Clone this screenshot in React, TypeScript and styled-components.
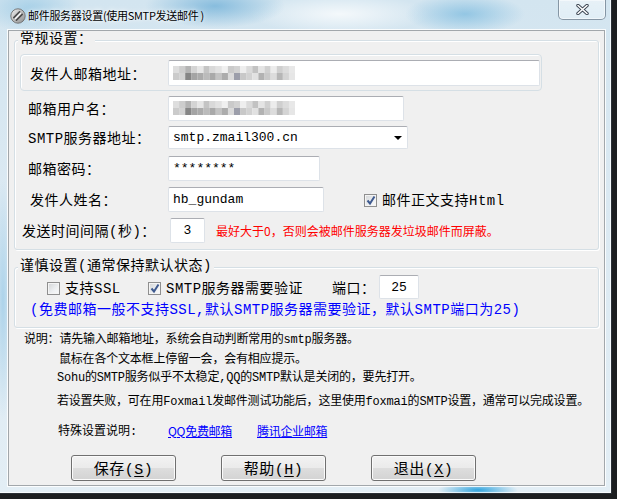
import React from 'react';
import styled, { createGlobalStyle } from 'styled-components';

const MIXED = `"Liberation Mono", "Noto Sans CJK SC", monospace`;
const SANS = `"Noto Sans CJK SC", "Noto Sans", sans-serif`;

const GlobalStyle = createGlobalStyle`
  html, body { margin: 0; padding: 0; }
  body {
    width: 617px;
    height: 499px;
    overflow: hidden;
    background: #1c1e20;
    font-family: ${MIXED};
  }
`;

// aero glass frame
const Window = styled.div`
  width: 612px;
  height: 494px;
  box-sizing: border-box;
  display: flex;
  flex-direction: column;
  border-right: 1px solid #2a3036;
  border-bottom: 1px solid #2a3036;
  background:
    radial-gradient(ellipse 40px 8px at 478px 490px, rgba(40, 160, 220, 0.95), rgba(40, 160, 220, 0) 100%),
    radial-gradient(ellipse 70px 22px at 215px 6px, rgba(110, 175, 215, 0.75), rgba(110, 175, 215, 0) 100%),
    radial-gradient(ellipse 60px 20px at 465px 14px, rgba(120, 185, 222, 0.7), rgba(120, 185, 222, 0) 100%),
    radial-gradient(ellipse 50px 24px at 30px 8px, rgba(150, 200, 228, 0.7), rgba(150, 200, 228, 0) 100%),
    radial-gradient(ellipse 90px 20px at 340px 14px, rgba(255, 255, 255, 0.75), rgba(255, 255, 255, 0) 100%),
    radial-gradient(ellipse 10px 120px at 3px 300px, rgba(160, 205, 232, 0.8), rgba(160, 205, 232, 0) 100%),
    linear-gradient(180deg, #d3e5f0 0%, #dbe9f2 40%, #e3eef5 100%);
  box-shadow: inset -1px -1px 0 rgba(255, 255, 255, 0.7);
`;

const TitleBar = styled.div`
  height: 30px;
  flex: 0 0 30px;
  display: flex;
  align-items: center;
  padding-left: 10px;
`;

const AppIcon = styled.svg`
  width: 16px;
  height: 16px;
  flex: 0 0 16px;
  margin-top: 1px;
`;

const TitleText = styled.div`
  margin-left: 2px;
  font-family: ${SANS};
  font-size: 11px;
  letter-spacing: -0.3px;
  color: #000;
  text-shadow: 0 0 6px #fff, 0 0 3px rgba(255, 255, 255, 0.9);
`;

const CloseButton = styled.div`
  align-self: flex-start;
  margin-left: auto;
  margin-right: 5px;
  width: 48px;
  height: 20px;
  box-sizing: border-box;
  border: 1px solid rgba(70, 90, 110, 0.6);
  border-top: none;
  border-radius: 0 0 5px 5px;
  background: linear-gradient(180deg, rgba(255, 255, 255, 0.45), rgba(230, 242, 248, 0.7));
  box-shadow: inset 0 0 0 1px rgba(255, 255, 255, 0.5);
  display: flex;
  align-items: center;
  justify-content: center;
`;

const Client = styled.div`
  margin-left: 8px;
  width: 597px;
  height: 456px;
  box-sizing: border-box;
  border: 1px solid #a2a7ab;
  box-shadow: 0 0 0 1px rgba(255, 255, 255, 0.85);
  background: #f0f0f0;
  padding: 0 5px;
  display: flex;
  flex-direction: column;
`;

const GroupBox = styled.div<{ $top: number; $height: number }>`
  position: relative;
  margin-top: ${(p) => p.$top}px;
  width: 585px;
  height: ${(p) => p.$height}px;
  flex: 0 0 auto;
  box-sizing: border-box;
  border: 1px solid #d5dfe5;
  border-radius: 3px;
  box-shadow: inset 1px 1px 0 #fff, 1px 1px 0 #fff;
  display: flex;
  flex-direction: column;
`;

const Legend = styled.span`
  position: absolute;
  left: 3px;
  top: -9px;
  padding: 0 2px;
  background: #f0f0f0;
  font-size: 14px;
  letter-spacing: 0.5px;
  line-height: 14px;
  color: #000;
`;

const Panel = styled.div`
  margin: 13px 0 0 5px;
  width: 522px;
  height: 37px;
  box-sizing: border-box;
  border: 1px solid #d5dfe5;
  border-radius: 4px;
  box-shadow: inset 1px 1px 0 #fff;
  display: flex;
  align-items: center;
`;

const Row = styled.div<{ $top: number; $height?: number }>`
  display: flex;
  align-items: center;
  height: ${(p) => p.$height ?? 26}px;
  margin-top: ${(p) => p.$top}px;
`;

const Label = styled.div<{ $indent: number; $width: number }>`
  box-sizing: border-box;
  flex: 0 0 ${(p) => p.$width}px;
  padding-left: ${(p) => p.$indent}px;
  font-size: 14px;
  letter-spacing: 0.5px;
  color: #000;
  white-space: nowrap;
`;

const TextBox = styled.div<{ $width: number; $height?: number; $center?: boolean }>`
  position: relative;
  box-sizing: border-box;
  flex: 0 0 ${(p) => p.$width}px;
  height: ${(p) => p.$height ?? 25}px;
  background: #fff;
  border: 1px solid #dde2e8;
  border-top-color: #abadb3;
  border-radius: 2px;
  display: flex;
  align-items: center;
  justify-content: ${(p) => (p.$center ? 'center' : 'flex-start')};
  padding-left: ${(p) => (p.$center ? 0 : 4)}px;
  font-family: "Liberation Mono", monospace;
  font-size: 13px;
  color: #000;
`;

const DropArrow = styled.span`
  position: absolute;
  right: 5px;
  top: 9px;
  width: 0;
  height: 0;
  border-left: 4px solid transparent;
  border-right: 4px solid transparent;
  border-top: 4px solid #000;
`;

const Hint = styled.span<{ $gap: number }>`
  margin-left: ${(p) => p.$gap}px;
  font-family: ${SANS};
  font-size: 12px;
  color: #ff0000;
  white-space: nowrap;
`;

const CheckItem = styled.div<{ $width: number; $gap?: number }>`
  display: flex;
  align-items: center;
  flex: 0 0 ${(p) => p.$width}px;
  margin-left: ${(p) => p.$gap ?? 0}px;
  font-size: 14px;
  letter-spacing: 0.5px;
  color: #000;
  white-space: nowrap;
`;

const Box = styled.span`
  position: relative;
  flex: 0 0 13px;
  width: 13px;
  height: 13px;
  box-sizing: border-box;
  border: 1px solid #8f8f8f;
  background: linear-gradient(135deg, #d2d4d6 0%, #eef0f2 60%, #fafafa 100%);
  box-shadow: inset 0 0 0 1px #f4f4f4;
  margin-right: 5px;
  margin-top: 2px;
`;

const Tick = styled.svg`
  position: absolute;
  left: 1px;
  top: 0px;
`;

const InfoLine = styled.div<{ $indent: number; $top: number; $color?: string; $size?: number }>`
  margin-top: ${(p) => p.$top}px;
  padding-left: ${(p) => p.$indent}px;
  height: 18px;
  line-height: 18px;
  font-size: ${(p) => p.$size ?? 12}px;
  letter-spacing: ${(p) => ((p.$size ?? 12) > 12 ? 0.5 : -0.2)}px;
  color: ${(p) => p.$color ?? '#000'};
  white-space: nowrap;
`;

const LinkRow = styled.div`
  display: flex;
  align-items: center;
  margin-top: 10px;
  padding-left: 44px;
  height: 18px;
  font-size: 12px;
  white-space: nowrap;
`;

const LinkCaption = styled.span`
  flex: 0 0 110px;
  color: #000;
`;

const Link = styled.a<{ $width: number }>`
  flex: 0 0 ${(p) => p.$width}px;
  font-family: ${SANS};
  color: #0000ff;
  text-decoration: underline;
  letter-spacing: -0.3px;
`;

const ButtonRow = styled.div`
  display: flex;
  gap: 45px;
  margin-top: 16px;
  padding-left: 57px;
`;

const Button = styled.button`
  width: 105px;
  height: 26px;
  box-sizing: border-box;
  border: 1px solid #707070;
  border-radius: 3px;
  background: linear-gradient(180deg, #f2f2f2 0%, #ebebeb 48%, #dddddd 52%, #d3d3d3 100%);
  box-shadow: inset 0 0 0 1px #fbfbfb;
  font-family: ${MIXED};
  font-size: 15px;
  letter-spacing: 0.5px;
  color: #000;
  padding: 0;

  u {
    text-underline-offset: 2px;
  }
`;

// pixelated address text
const mosaicTop = ['#dedede', '#cdcdcd', '#b4b4b4', '#d4d4d4', '#e6e6e6', '#c4c4c4', '#d9d9d9', '#e2e2e2', '#f0f0f0', '#cacaca', '#d2d2d2', '#eeeeee', '#dadada', '#c2c2c2', '#e4e4e4', '#d0d0d0', '#ececec', '#cfcfcf', '#dcdcdc', '#e8e8e8'];
const mosaicBottom = ['#cbcbcb', '#d3d3d3', '#868686', '#a4a4a4', '#ababab', '#bbbbbb', '#a9a9a9', '#c3c3c3', '#acacac', '#dadada', '#9c9eaa', '#c8c8c8', '#d2d2d2', '#e1e1e1', '#b2b2b2', '#c9c9c9', '#dcdcdc', '#b6b6b6', '#d4d4d4', '#e6e6e6'];

const Mosaic: React.FC = () => (
  <svg width="122" height="14" viewBox="0 0 122 14">
    {mosaicTop.map((c, i) => (
      <rect key={`t${i}`} x={i * 6.1} y={0} width={6.2} height={7} fill={c} />
    ))}
    {mosaicBottom.map((c, i) => (
      <rect key={`b${i}`} x={i * 6.1} y={7} width={6.2} height={7} fill={c} />
    ))}
  </svg>
);

const CheckBox: React.FC<{ checked?: boolean }> = ({ checked }) => (
  <Box>
    {checked && (
      <Tick width="10" height="11" viewBox="0 0 10 11">
        <path d="M1.5 5.5 L4 8.5 L8.5 1.5" fill="none" stroke="#3f5a8f" strokeWidth="2" />
      </Tick>
    )}
  </Box>
);

export default function App() {
  return (
    <>
      <GlobalStyle />
      <Window>
        <TitleBar>
          <AppIcon viewBox="0 0 16 16">
            <defs>
              <linearGradient id="disc" x1="0" y1="0" x2="1" y2="1">
                <stop offset="0" stopColor="#f0f0f0" />
                <stop offset="1" stopColor="#8c8c8c" />
              </linearGradient>
            </defs>
            <circle cx="8" cy="8" r="7.2" fill="url(#disc)" stroke="#6c6c6c" strokeWidth="0.9" />
            <path d="M3.8 9.6 L9.6 3.8 M6.4 12.2 L12.2 6.4" stroke="#4a4a4a" strokeWidth="1.6" strokeLinecap="round" />
            <path d="M5.2 10.8 L10.8 5.2" stroke="#ffffff" strokeWidth="1.2" />
          </AppIcon>
          <TitleText>邮件服务器设置(使用SMTP发送邮件 )</TitleText>
          <CloseButton>
            <svg width="13" height="11" viewBox="0 0 13 11">
              <path d="M2 1.5 L11 9.5 M11 1.5 L2 9.5" stroke="#3a4450" strokeWidth="3.4" strokeLinecap="round" />
              <path d="M2 1.5 L11 9.5 M11 1.5 L2 9.5" stroke="#ffffff" strokeWidth="1.6" strokeLinecap="round" />
            </svg>
          </CloseButton>
        </TitleBar>

        <Client>
          <GroupBox $top={9} $height={210}>
            <Legend>常规设置：</Legend>
            <Panel>
              <Label $indent={9} $width={147}>发件人邮箱地址：</Label>
              <TextBox $width={372} $height={26}>
                <Mosaic />
              </TextBox>
            </Panel>
            <Row $top={4}>
              <Label $indent={13} $width={153}>邮箱用户名：</Label>
              <TextBox $width={236}>
                <Mosaic />
              </TextBox>
            </Row>
            <Row $top={3}>
              <Label $indent={13} $width={153}>SMTP服务器地址：</Label>
              <TextBox $width={240} $height={23}>
                smtp.zmail300.cn
                <DropArrow />
              </TextBox>
            </Row>
            <Row $top={5}>
              <Label $indent={13} $width={153}>邮箱密码：</Label>
              <TextBox $width={152}>********</TextBox>
            </Row>
            <Row $top={5}>
              <Label $indent={15} $width={153}>发件人姓名：</Label>
              <TextBox $width={156}>hb_gundam</TextBox>
              <CheckItem $width={160} $gap={40}>
                <CheckBox checked />
                邮件正文支持Html
              </CheckItem>
            </Row>
            <Row $top={5}>
              <Label $indent={7} $width={155}>发送时间间隔(秒)：</Label>
              <TextBox $width={35} $center>3</TextBox>
              <Hint $gap={11}>最好大于0，否则会被邮件服务器发垃圾邮件而屏蔽。</Hint>
            </Row>
          </GroupBox>

          <GroupBox $top={17} $height={61}>
            <Legend>谨慎设置(通常保持默认状态)</Legend>
            <Row $top={7} $height={24}>
              <CheckItem $width={101} $gap={32}>
                <CheckBox />
                支持SSL
              </CheckItem>
              <CheckItem $width={184}>
                <CheckBox checked />
                SMTP服务器需要验证
              </CheckItem>
              <Label $indent={0} $width={47}>端口：</Label>
              <TextBox $width={40} $height={24} $center>25</TextBox>
            </Row>
            <InfoLine $indent={15} $top={2} $size={14} $color="#0000ff">
              (免费邮箱一般不支持SSL,默认SMTP服务器需要验证，默认SMTP端口为25)
            </InfoLine>
          </GroupBox>

          <InfoLine $indent={10} $top={3}>说明：请先输入邮箱地址，系统会自动判断常用的smtp服务器。</InfoLine>
          <InfoLine $indent={45} $top={2}>鼠标在各个文本框上停留一会，会有相应提示。</InfoLine>
          <InfoLine $indent={43} $top={0}>Sohu的SMTP服务似乎不太稳定,QQ的SMTP默认是关闭的，要先打开。</InfoLine>
          <InfoLine $indent={43} $top={6}>若设置失败，可在用Foxmail发邮件测试功能后，这里使用foxmai的SMTP设置，通常可以完成设置。</InfoLine>

          <LinkRow>
            <LinkCaption>特殊设置说明:</LinkCaption>
            <Link $width={89} href="#">QQ免费邮箱</Link>
            <Link $width={80} href="#">腾讯企业邮箱</Link>
          </LinkRow>

          <ButtonRow>
            <Button>保存(<u>S</u>)</Button>
            <Button>帮助(<u>H</u>)</Button>
            <Button>退出(<u>X</u>)</Button>
          </ButtonRow>
        </Client>
      </Window>
    </>
  );
}
